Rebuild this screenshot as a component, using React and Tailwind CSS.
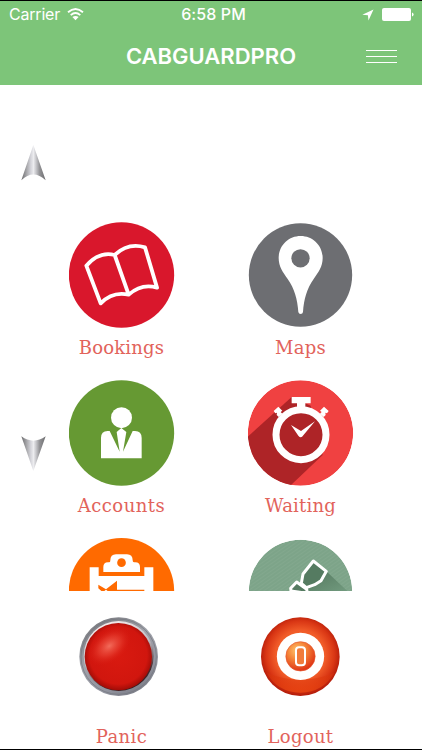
import React from 'react';

const BookingsIcon = () => (
  <svg width="106" height="106" viewBox="27 21 318 318">
    <circle cx="184.5" cy="180" r="158" fill="#d9172c" />
    <path
      d="M79 152 Q118 108 164 120 Q204 82 255 97 L291 218 Q245 204 206 239 Q158 228 122 265 Z M164 120 L206 239"
      fill="none"
      stroke="#fff"
      strokeWidth="11.5"
      strokeLinejoin="round"
    />
  </svg>
);

const MapsIcon = () => (
  <svg width="106" height="106" viewBox="24 21 318 318">
    <circle cx="181.5" cy="180" r="155" fill="#6d6e72" />
    <path
      d="M182 63 C145 63 116 92 116 129 C116 155 129 172 143 192 C164 222 172 252 175 291 Q176 297 182 297 Q188 297 189 291 C192 252 200 222 221 192 C235 172 248 155 248 129 C248 92 219 63 182 63 Z"
      fill="#fff"
    />
    <circle cx="181.5" cy="130" r="27.5" fill="#6d6e72" />
  </svg>
);

const AccountsIcon = () => (
  <svg width="106" height="106" viewBox="27 21 318 318">
    <circle cx="184.5" cy="180" r="158" fill="#669933" />
    <circle cx="184.5" cy="134" r="31.5" fill="#fff" />
    <path d="M123 256 V195 Q123 174 143 174 H149 L179 236 L170 177 L184 165 L199 177 L189 236 L218 174 H225 Q245 174 245 195 V256 Z" fill="#fff" />
  </svg>
);

const WaitingIcon = () => (
  <svg width="106" height="106" viewBox="24 21 318 318">
    <defs>
      <clipPath id="waitingClip">
        <circle cx="181.5" cy="180" r="158" />
      </clipPath>
    </defs>
    <g clipPath="url(#waitingClip)">
      <circle cx="181.5" cy="180" r="158" fill="#f04141" />
      <path d="M155 72 L20 194 V339 H150 L248 246 L212 98 Z" fill="#ae2427" />
    </g>
    <circle cx="183" cy="185" r="75" fill="#ae2427" stroke="#fff" strokeWidth="21" />
    <path d="M155 72 H212 V91 H196 V106 H171 V91 H155 Z" fill="#fff" />
    <path d="M101 114 L115 101 L127 113 L122 117 L127 122 L116 132 L110 126 L111 119 L106 121 Z M266 114 L252 101 L240 113 L245 117 L240 122 L251 132 L257 126 L256 119 L261 121 Z" fill="#fff" />
    <path d="M153 156 L183 174 L225 145 L190 187 Q183 198 175 188 Z" fill="#fff" />
  </svg>
);

const ClipboardIcon = () => (
  <svg width="106" height="53" viewBox="27 24 318 159">
    <circle cx="184.5" cy="182" r="158" fill="#ff6a00" />
    <path d="M89 112 H116 V138 H253 V112 H280 V190 H89 Z" fill="#fff" />
    <path d="M130 126 V111 Q130 97 144 97 H148 Q151 97 151 91 Q151 73 168 73 H201 Q218 73 218 91 Q218 97 222 97 H226 Q240 97 240 111 V126 Z" fill="#fff" />
    <circle cx="184.5" cy="98" r="13" fill="#ff6a00" />
    <path d="M115 164 L138 178 L171 152 V179 H253 V183 H143 L138 179 L133 183 H124 L115 175 Z" fill="#ff6a00" />
  </svg>
);

const BottleIcon = () => (
  <svg width="106" height="53" viewBox="24 24 318 159">
    <defs>
      <clipPath id="bottleClip">
        <circle cx="181.5" cy="184" r="155" />
      </clipPath>
      <pattern id="bottleLines" width="9" height="9" patternUnits="userSpaceOnUse" patternTransform="rotate(-35)">
        <rect width="9" height="9" fill="#7da489" />
        <rect width="9" height="2" fill="#86aa90" />
      </pattern>
      <linearGradient id="bottleShade" x1="0" y1="0" x2="1" y2="1">
        <stop offset="0" stopColor="#53765d" />
        <stop offset="1" stopColor="#719a7e" />
      </linearGradient>
    </defs>
    <g clipPath="url(#bottleClip)">
      <circle cx="181.5" cy="184" r="155" fill="url(#bottleLines)" />
      <path d="M258 123 L322 183 H190 L226 163 Z" fill="url(#bottleShade)" />
      <path d="M220 93 L259 124 L243 152 L224 164 L199 173 L184 160 L189 132 Z" fill="#557b61" stroke="#fff" strokeWidth="9" strokeLinejoin="round" />
      <path d="M153 183 L152 175 L170 156 L200 178 L202 190 Z" fill="#557b61" stroke="#fff" strokeWidth="9" strokeLinejoin="round" />
    </g>
  </svg>
);

const PanicIcon = () => (
  <svg width="106" height="80" viewBox="-3 21 318 240">
    <defs>
      <linearGradient id="panicRim" x1="0.2" y1="0" x2="0.8" y2="1">
        <stop offset="0" stopColor="#77787d" />
        <stop offset="0.4" stopColor="#a0a2aa" />
        <stop offset="0.75" stopColor="#92949f" />
        <stop offset="1" stopColor="#777983" />
      </linearGradient>
      <linearGradient id="panicRing" x1="0.3" y1="0" x2="0.7" y2="1">
        <stop offset="0" stopColor="#f7eded" />
        <stop offset="0.45" stopColor="#bfbec5" />
        <stop offset="0.8" stopColor="#4a2a2d" />
        <stop offset="1" stopColor="#30191c" />
      </linearGradient>
      <radialGradient id="panicRed" cx="0.5" cy="0.48" r="0.52">
        <stop offset="0" stopColor="#d91a10" />
        <stop offset="0.82" stopColor="#d1160e" />
        <stop offset="1" stopColor="#a00c07" />
      </radialGradient>
      <radialGradient id="panicGlow">
        <stop offset="0" stopColor="#f4705f" stopOpacity="0.95" />
        <stop offset="0.5" stopColor="#ea4536" stopOpacity="0.6" />
        <stop offset="1" stopColor="#d91a10" stopOpacity="0" />
      </radialGradient>
    </defs>
    <circle cx="146" cy="140" r="118" fill="url(#panicRim)" />
    <circle cx="146" cy="140" r="113" fill="none" stroke="#73757d" strokeWidth="2" />
    <circle cx="146" cy="138" r="105" fill="url(#panicRing)" />
    <circle cx="145" cy="140" r="101" fill="url(#panicRed)" />
    <ellipse cx="118" cy="108" rx="75" ry="48" fill="url(#panicGlow)" transform="rotate(-38 118 108)" />
  </svg>
);

const LogoutIcon = () => (
  <svg width="106" height="80" viewBox="-6 21 318 240">
    <defs>
      <radialGradient id="logoutBall" cx="0.5" cy="0.48" r="0.53">
        <stop offset="0" stopColor="#ff812d" />
        <stop offset="0.6" stopColor="#f05a28" />
        <stop offset="0.82" stopColor="#d93614" />
        <stop offset="1" stopColor="#ad1707" />
      </radialGradient>
      <linearGradient id="logoutShine" x1="0" y1="0" x2="0" y2="1">
        <stop offset="0" stopColor="#d8330c" stopOpacity="0.5" />
        <stop offset="1" stopColor="#ee4a12" stopOpacity="0.75" />
      </linearGradient>
      <radialGradient id="logoutCore" cx="0.38" cy="0.3" r="0.7">
        <stop offset="0" stopColor="#ffc56c" />
        <stop offset="0.45" stopColor="#f58438" />
        <stop offset="1" stopColor="#df3515" />
      </radialGradient>
    </defs>
    <circle cx="151" cy="140" r="118" fill="url(#logoutBall)" />
    <path d="M50 188 Q151 230 253 188 Q220 246 151 248 Q82 246 50 188 Z" fill="url(#logoutShine)" />
    <circle cx="151.5" cy="139" r="71" fill="#fff" />
    <circle cx="151.5" cy="139" r="44" fill="url(#logoutCore)" stroke="#e5542a" strokeWidth="2" />
    <rect x="138" y="112" width="27" height="54" rx="9" fill="#f17b3b" stroke="#fff" strokeWidth="6" />
  </svg>
);

const ArrowIcon = ({ id, viewBox, d }) => (
  <svg width="26" height="37" viewBox={viewBox}>
    <defs>
      <linearGradient id={id} x1="0" x2="1">
        <stop offset="0" stopColor="#6b6b6d" />
        <stop offset="0.2" stopColor="#a2a2a5" />
        <stop offset="0.38" stopColor="#d2d2d8" />
        <stop offset="0.5" stopColor="#ececef" />
        <stop offset="0.62" stopColor="#c2c2c6" />
        <stop offset="0.75" stopColor="#939396" />
        <stop offset="1" stopColor="#6b6b6d" />
      </linearGradient>
    </defs>
    <path d={d} fill={`url(#${id})`} />
  </svg>
);

const menuItems = [
  { label: 'Bookings', icon: BookingsIcon, tracking: 'tracking-[0.2px]' },
  { label: 'Maps', icon: MapsIcon, tracking: 'tracking-[0.3px]' },
  { label: 'Accounts', icon: AccountsIcon, tracking: 'tracking-[0.5px]' },
  { label: 'Waiting', icon: WaitingIcon, tracking: 'tracking-[0.2px]' },
  { label: '', icon: ClipboardIcon },
  { label: '', icon: BottleIcon },
];

const footerItems = [
  { label: 'Panic', icon: PanicIcon, tracking: 'tracking-[0.4px]' },
  { label: 'Logout', icon: LogoutIcon, tracking: 'tracking-[0.3px]' },
];

const Label = ({ text, tracking }) => (
  <div className={`font-['DejaVu_Serif',serif] text-[18px] leading-[20px] text-[#e2635b] ${tracking}`}>{text}</div>
);

const App = () => {
  return (
    <div className="w-[422px] h-[750px] bg-white border-y border-black overflow-hidden flex flex-col">
      <header className="h-[84px] shrink-0 bg-[#7dc579] text-white font-['Inter',sans-serif]">
        <div className="h-[27px] grid grid-cols-[1fr_auto_1fr] items-center pl-[9px] pr-[8px] text-[16px] leading-[27px]">
          <div className="flex items-center gap-[7px]">
            <span className="tracking-[-0.2px]">Carrier</span>
            <svg width="17" height="13" viewBox="0 0 17 13">
              <path d="M1 4.3 Q8.5 -2.3 16 4.3 M3.7 7.1 Q8.5 3 13.3 7.1" fill="none" stroke="#fff" strokeWidth="1.8" />
              <path d="M5.4 9.1 Q8.5 6.7 11.6 9.1 L8.5 12.3 Z" fill="#fff" />
            </svg>
          </div>
          <span className="font-medium pl-[4px] tracking-[0.1px]">6:58 PM</span>
          <div className="flex items-center justify-end gap-[8px]">
            <svg width="12" height="12" viewBox="0 0 12 12">
              <path d="M11.5 0.5 L0.3 5.8 L5.9 6.3 L6.5 11.6 Z" fill="#fff" />
            </svg>
            <svg width="32" height="13" viewBox="0 0 32 13">
              <rect x="0" y="0" width="29" height="13" rx="2" fill="#fff" />
              <path d="M30 4.5 Q31.6 5 31.6 6.5 Q31.6 8 30 8.5 Z" fill="#fff" />
            </svg>
          </div>
        </div>
        <div className="h-[56px] grid grid-cols-[1fr_auto_1fr] items-center pr-[25px] pl-[25px]">
          <span></span>
          <h1 className="text-[22px] font-semibold leading-[56px]">CABGUARDPRO</h1>
          <button className="justify-self-end flex flex-col gap-[5px]">
            <span className="block w-[31px] h-px bg-white"></span>
            <span className="block w-[31px] h-px bg-white"></span>
            <span className="block w-[31px] h-px bg-white"></span>
          </button>
        </div>
      </header>

      <main className="h-[506px] shrink-0 overflow-hidden flex">
        <aside className="w-[46px] shrink-0 pl-[21px] pt-[60px] flex flex-col gap-[252px]">
          <ArrowIcon id="arrowUp" viewBox="33 45 78 111" d="M70 45 L107 151 Q70 116 34 151 Z" />
          <ArrowIcon id="arrowDown" viewBox="33 27 78 111" d="M34 34 Q70 60 107 34 L70 138 Z" />
        </aside>
        <div className="grid grid-cols-[151px_207px] auto-rows-[158px] pt-[137px]">
          {menuItems.map(({ label, icon: Icon, tracking }, i) => (
            <div key={i} className="flex flex-col items-center gap-[10px]">
              <Icon />
              {label && <Label text={label} tracking={tracking} />}
            </div>
          ))}
        </div>
      </main>

      <footer className="grid grid-cols-[151px_207px] pl-[46px] pt-[26px]">
        {footerItems.map(({ label, icon: Icon, tracking }) => (
          <div key={label} className="flex flex-col items-center gap-[30px]">
            <Icon />
            <Label text={label} tracking={tracking} />
          </div>
        ))}
      </footer>
    </div>
  );
};

export default App;
